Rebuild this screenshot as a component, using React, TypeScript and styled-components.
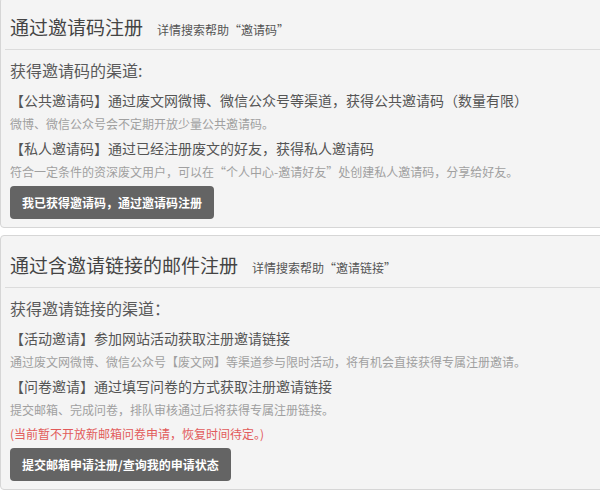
import React from "react";
import styled, { createGlobalStyle } from "styled-components";

const Global = createGlobalStyle`
  html, body { margin: 0; padding: 0; background: #ffffff; overflow: hidden; }
  body { font-family: "Noto Sans CJK SC", "Microsoft YaHei", "Noto Sans", sans-serif; }
`;

const Page = styled.div`
  margin-top: -3px;
  display: flex;
  flex-direction: column;
  gap: 7px;
`;

const Panel = styled.section`
  background: #f4f4f4;
  border: 1px solid #d6d6d6;
  border-radius: 4px;
  margin-right: -12px;
  padding: 0 4px 8px 4px;
`;

const Header = styled.div`
  display: flex;
  align-items: baseline;
  gap: 14px;
  padding: 17px 0 10px 5px;
  border-bottom: 1px solid #dcdcdc;
`;

const Title = styled.h2`
  margin: 0;
  font-size: 19px;
  font-weight: normal;
  line-height: 24px;
  color: #444;
`;

const Hint = styled.span`
  font-size: 12px;
  color: #555;
  line-height: 1;
`;

const Body = styled.div`
  padding: 0 5px;
  display: flex;
  flex-direction: column;
  align-items: flex-start;
`;

const SubTitle = styled.h3`
  margin: 8px 0 6px 0;
  font-size: 16px;
  font-weight: normal;
  line-height: 24px;
  color: #5a5a5a;
`;

const Item = styled.p`
  margin: 0;
  font-size: 14px;
  line-height: 24px;
  color: #555;
`;

const Note = styled.p<{ $tone?: "gray" | "red" }>`
  margin: 0;
  font-size: 12px;
  line-height: 24px;
  color: ${(p) => (p.$tone === "red" ? "#e25b5b" : "#a0a0a0")};
`;

const Button = styled.button`
  margin-top: 2px;
  height: 33px;
  padding: 0 12px;
  border: none;
  border-radius: 4px;
  background: #646464;
  color: #ffffff;
  font-family: inherit;
  font-size: 12px;
  font-weight: bold;
  cursor: pointer;
`;

export default function App() {
  return (
    <>
      <Global />
      <Page>
        <Panel>
          <Header>
            <Title>通过邀请码注册</Title>
            <Hint>详情搜索帮助“邀请码”</Hint>
          </Header>
          <Body>
            <SubTitle>获得邀请码的渠道:</SubTitle>
            <Item>【公共邀请码】通过废文网微博、微信公众号等渠道，获得公共邀请码（数量有限）</Item>
            <Note>微博、微信公众号会不定期开放少量公共邀请码。</Note>
            <Item>【私人邀请码】通过已经注册废文的好友，获得私人邀请码</Item>
            <Note>符合一定条件的资深废文用户，可以在“个人中心-邀请好友”处创建私人邀请码，分享给好友。</Note>
            <Button>我已获得邀请码，通过邀请码注册</Button>
          </Body>
        </Panel>
        <Panel>
          <Header>
            <Title>通过含邀请链接的邮件注册</Title>
            <Hint>详情搜索帮助“邀请链接”</Hint>
          </Header>
          <Body>
            <SubTitle>获得邀请链接的渠道：</SubTitle>
            <Item>【活动邀请】参加网站活动获取注册邀请链接</Item>
            <Note>通过废文网微博、微信公众号【废文网】等渠道参与限时活动，将有机会直接获得专属注册邀请。</Note>
            <Item>【问卷邀请】通过填写问卷的方式获取注册邀请链接</Item>
            <Note>提交邮箱、完成问卷，排队审核通过后将获得专属注册链接。</Note>
            <Note $tone="red">(当前暂不开放新邮箱问卷申请，恢复时间待定。)</Note>
            <Button>提交邮箱申请注册/查询我的申请状态</Button>
          </Body>
        </Panel>
      </Page>
    </>
  );
}
